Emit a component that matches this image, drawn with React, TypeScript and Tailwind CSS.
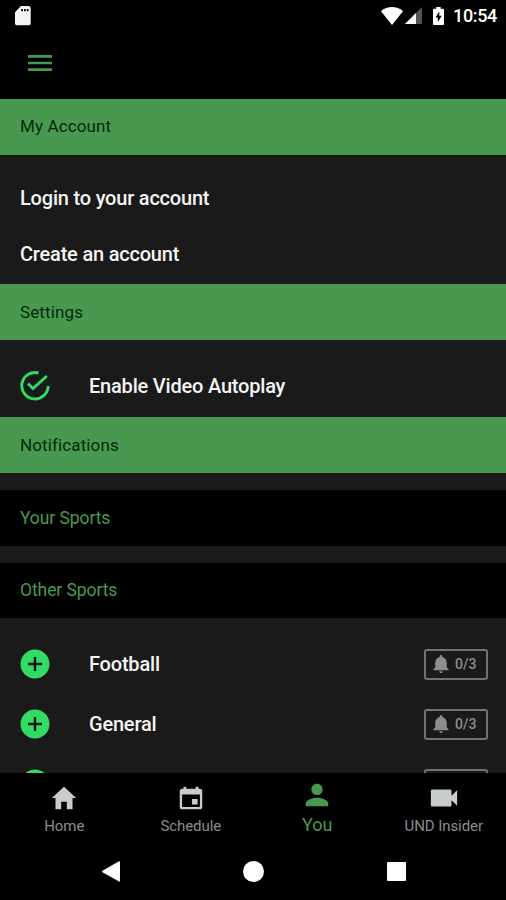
import type { IconType } from 'react-icons'
import {
  IoMdCalendar,
  IoMdHome,
  IoMdMenu,
  IoMdNotifications,
  IoMdPerson,
  IoMdVideocam,
} from 'react-icons/io'
import clsx from 'clsx'

const otherSports = [
  { name: 'Football', alerts: '0/3' },
  { name: 'General', alerts: '0/3' },
  { name: '', alerts: '' },
]

const tabs: { label: string; icon: IconType; active?: boolean }[] = [
  { label: 'Home', icon: IoMdHome },
  { label: 'Schedule', icon: IoMdCalendar },
  { label: 'You', icon: IoMdPerson, active: true },
  { label: 'UND Insider', icon: IoMdVideocam },
]

function StatusBar() {
  return (
    <div className="flex h-[31px] shrink-0 items-center pr-[9px] pl-[15px] text-white">
      <svg className="h-5 w-4" viewBox="0 0 16 20" fill="#f4f4f4">
        <path
          fillRule="evenodd"
          d="M6 0h7.700a2 2 0 0 1 2 2v15.500a1.800 1.800 0 0 1-1.800 1.800H1.800A1.800 1.800 0 0 1 0 17.500V6.200zM6.200 3v2.300h1.700V3zM9 3v2.300h1.700V3zM11.800 3v2.300h1.700V3z"
        />
      </svg>
      <svg className="ml-auto h-[18px] w-[22px]" viewBox="0 0 22 18" fill="#fff">
        <path d="M0 4.300C6.200-1.300 15.800-1.300 22 4.300L11 18z" />
      </svg>
      <svg className="ml-0.5 h-[17px] w-[17px]" viewBox="0 0 17 17">
        <path d="M17 0v17H0z" fill="#555" />
        <path d="M11 6v11H0z" fill="#fff" />
      </svg>
      <svg className="ml-[11px] h-[18px] w-[11px]" viewBox="0 0 11 18">
        <path
          d="M3.300 0h4.400v1.800H10a1 1 0 0 1 1 1V17a1 1 0 0 1-1 1H1a1 1 0 0 1-1-1V2.800a1 1 0 0 1 1-1h2.300z"
          fill="#fff"
        />
        <path d="M6.300 4.500 2.500 10.500h2.300v4.500l3.900-6.200H6.300z" fill="#000" />
      </svg>
      <span className="ml-[9px] w-11 text-[18px] font-medium leading-none tracking-[-0.35px]">
        10:54
      </span>
    </div>
  )
}

function AddCircle() {
  return (
    <svg className="size-[30px] shrink-0" viewBox="0 0 30 30">
      <circle cx="15" cy="15" r="14.500" fill="#32db64" />
      <path d="M15 8v14M8 15h14" stroke="#1a1a1a" strokeWidth="2.500" />
    </svg>
  )
}

function CheckCircle() {
  return (
    <svg
      className="size-[30px] shrink-0"
      viewBox="0 0 30 30"
      fill="none"
      stroke="#32db64"
      strokeWidth="2.900"
    >
      <path d="M18.500 2A13.200 13.200 0 1 0 28.200 15" />
      <path d="M8 12.500l5 5L26.800 5" />
    </svg>
  )
}

function SectionHeader({ title, className }: { title: string; className?: string }) {
  return (
    <h2
      className={clsx(
        'flex h-14 shrink-0 items-center bg-[#48994f] px-5 text-[17px] font-normal tracking-[0.12px] text-[#06290b]',
        className,
      )}
    >
      {title}
    </h2>
  )
}

function SportsHeader({ title }: { title: string }) {
  return (
    <h3 className="mt-[17px] flex h-[55.500px] shrink-0 items-center bg-black px-5 text-[17.500px] font-normal tracking-[-0.08px] text-[#48994f]">
      {title}
    </h3>
  )
}

function SportRow({ name, alerts }: { name: string; alerts: string }) {
  return (
    <li className="flex h-[60px] items-center pr-[18px] pl-5">
      <AddCircle />
      <span className="ml-[39px]">{name}</span>
      <span className="ml-auto flex h-[31px] w-16 items-center rounded-[3px] border-2 border-[#727272] pl-1 text-[14px] tracking-normal text-[#8d8d8d]">
        <IoMdNotifications className="mr-[3px] size-[22px] shrink-0" />
        {alerts}
      </span>
    </li>
  )
}

export default function App() {
  return (
    <div className="flex h-[900px] w-[506px] flex-col overflow-hidden bg-black font-['Roboto',sans-serif]">
      <StatusBar />

      <header className="flex h-[68px] shrink-0 items-center px-6 pb-1">
        <IoMdMenu className="size-8 text-[#48994f]" />
      </header>

      <main className="flex h-[674px] shrink-0 flex-col overflow-hidden bg-[#1a1a1a] text-[20px] font-medium tracking-[-0.2px] text-[#f4f4f4]">
        <SectionHeader title="My Account" />
        <ul className="h-[129px] shrink-0 px-5 pt-[15px]">
          <li className="flex h-14 items-center">Login to your account</li>
          <li className="flex h-14 items-center">Create an account</li>
        </ul>

        <SectionHeader title="Settings" className="pt-px" />
        <div className="flex h-[77px] shrink-0 items-center pt-[15px] pl-5">
          <CheckCircle />
          <span className="ml-[39px]">Enable Video Autoplay</span>
        </div>

        <SectionHeader title="Notifications" className="pt-px" />
        <SportsHeader title="Your Sports" />
        <SportsHeader title="Other Sports" />
        <ul className="pt-[16.400px]">
          {otherSports.map((sport) => (
            <SportRow key={sport.name} {...sport} />
          ))}
        </ul>
      </main>

      <nav className="ml-px grid h-[69px] w-[506px] shrink-0 grid-cols-4">
        {tabs.map(({ label, icon: Icon, active }) =>
          active ? (
            <div key={label} className="flex flex-col items-center pt-[7px] text-[#48994f]">
              <Icon className="size-[30px]" />
              <span className="mt-[5px] text-[18px] leading-5">{label}</span>
            </div>
          ) : (
            <div key={label} className="flex flex-col items-center pt-2.5 text-[#8c8c8c]">
              <Icon className="size-[30px] text-[#c8cccc]" />
              <span className="mt-[3px] text-[15px] leading-5 tracking-[-0.08px]">{label}</span>
            </div>
          ),
        )}
      </nav>

      <div className="flex h-[58px] items-center justify-between pr-[100px] pl-[102px]">
        <svg className="h-[21px] w-[18px]" viewBox="0 0 18 21" fill="#fff">
          <path d="M18 1v19q0 1.200-1 .6L.500 11.300q-.900-.800 0-1.500L17 .3q1-.5 1 .700z" />
        </svg>
        <span className="size-[21px] rounded-full bg-white" />
        <span className="size-[19px] rounded-[1px] bg-white" />
      </div>
    </div>
  )
}
